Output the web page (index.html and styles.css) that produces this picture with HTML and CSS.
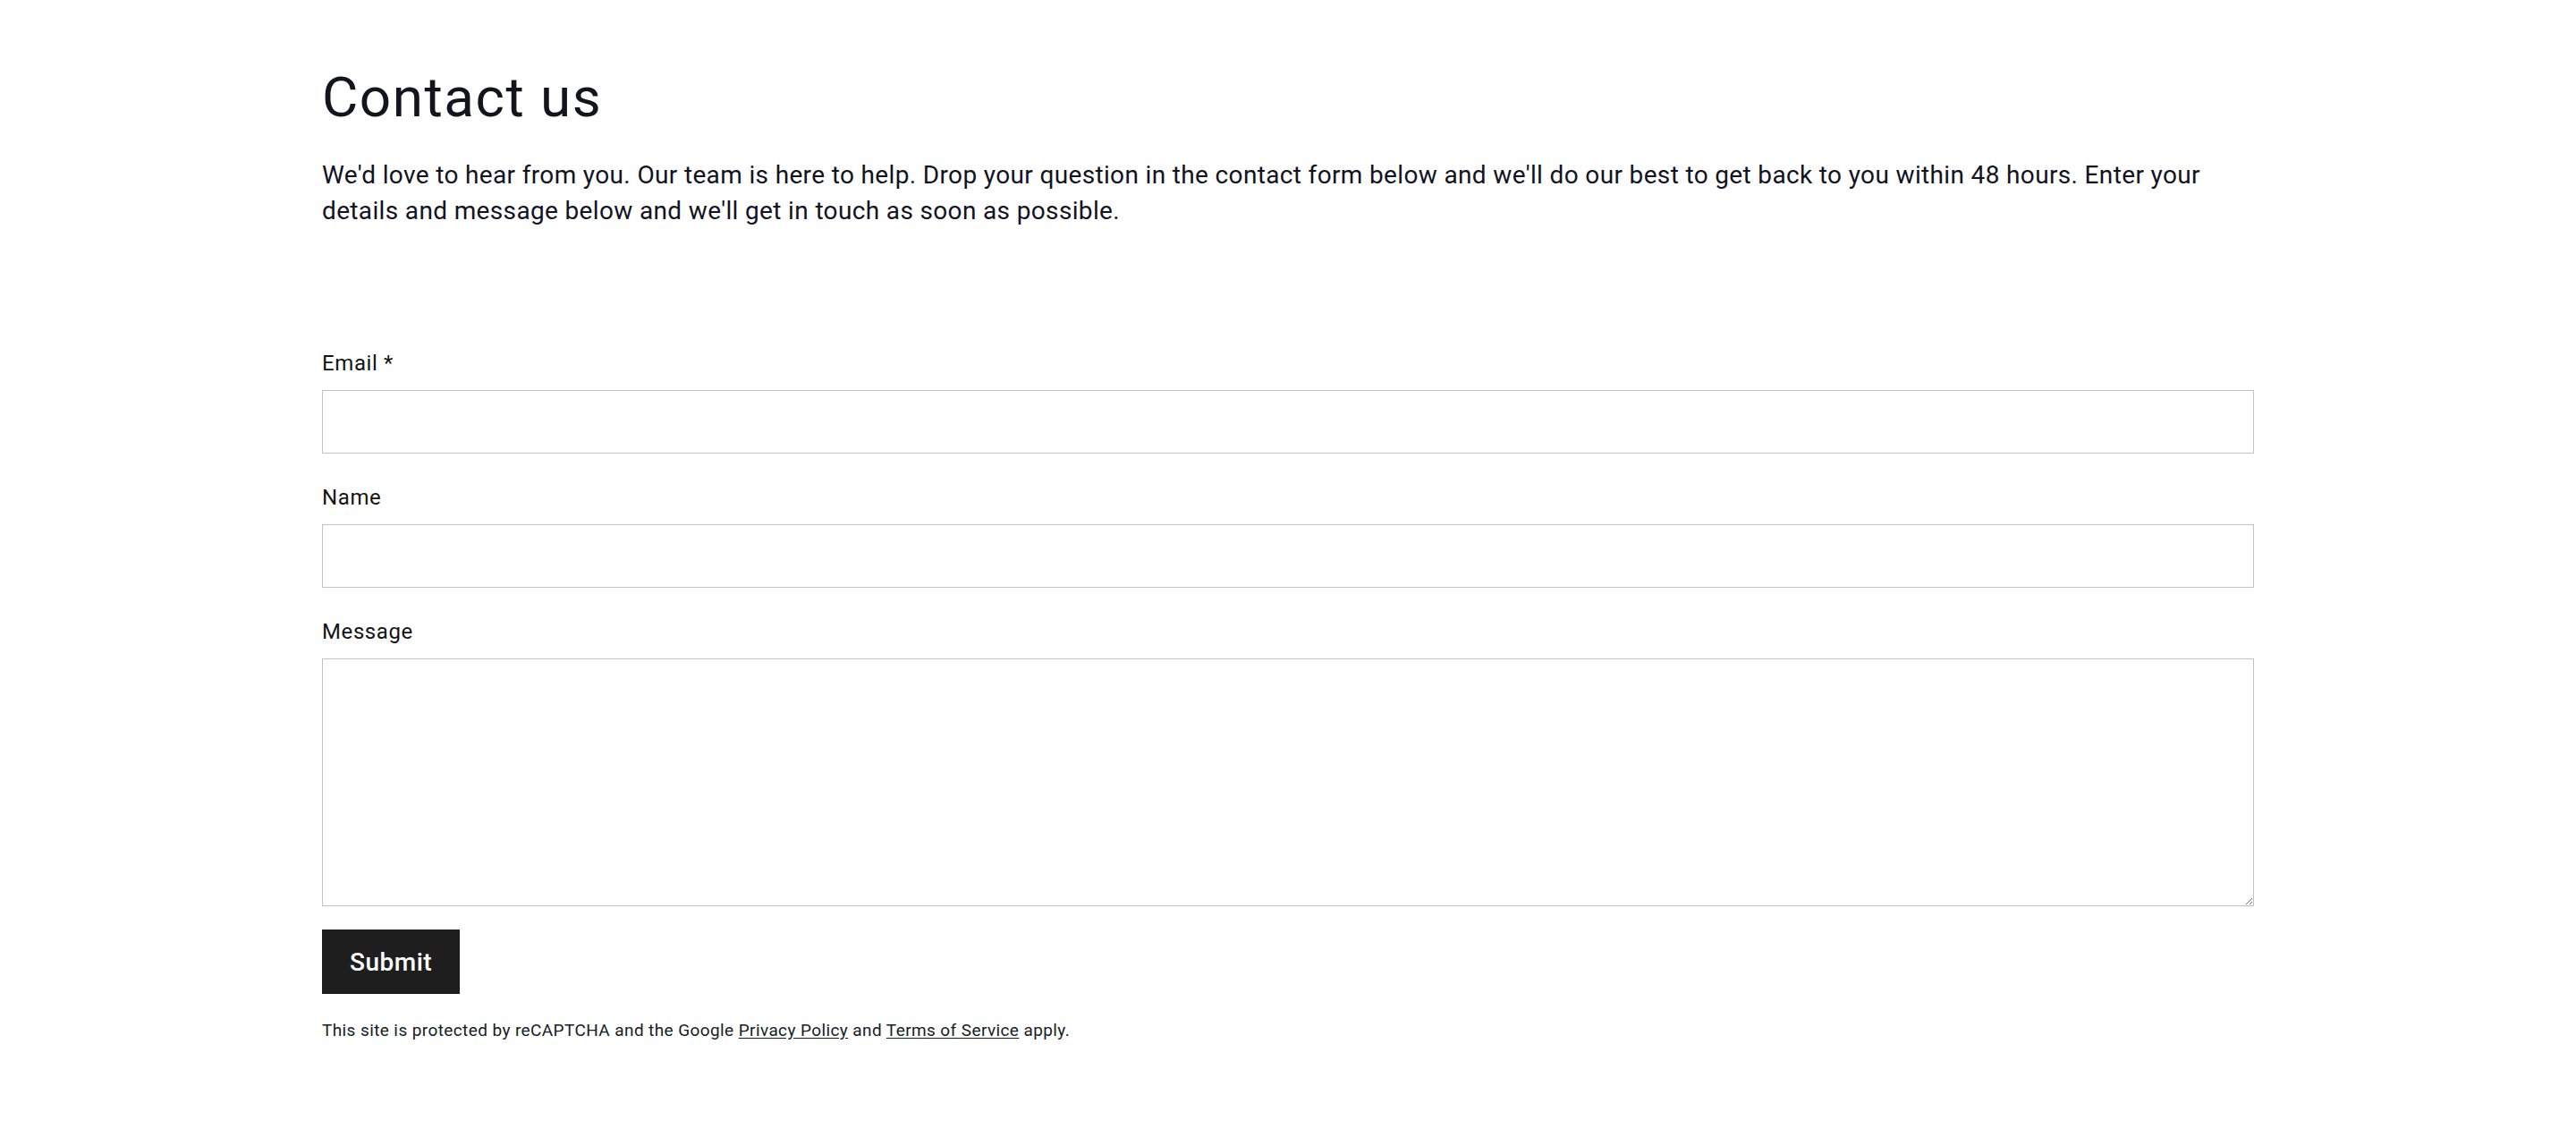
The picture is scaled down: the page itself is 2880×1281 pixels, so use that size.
FILE: index.html
```html
<!DOCTYPE html>
<html lang="en">
<head>
<meta charset="utf-8">
<title>Contact us</title>
<link rel="stylesheet" href="styles.css">
</head>
<body>
<main class="page">
  <header class="intro">
    <h1 class="title">Contact us</h1>
    <p class="lead">We'd love to hear from you. Our team is here to help. Drop your question in the contact form below and we'll do our best to get back to you within 48 hours. Enter your details and message below and we'll get in touch as soon as possible.</p>
  </header>
  <form class="form">
    <div class="field">
      <label class="label" for="email">Email *</label>
      <input class="input" id="email" type="email">
    </div>
    <div class="field">
      <label class="label" for="name">Name</label>
      <input class="input" id="name" type="text">
    </div>
    <div class="field field-last">
      <label class="label" for="message">Message</label>
      <textarea class="textarea" id="message"></textarea>
    </div>
    <div class="actions">
      <button class="submit" type="button">Submit</button>
    </div>
    <p class="legal">This site is protected by reCAPTCHA and the Google <a href="#">Privacy Policy</a> and <a href="#">Terms of Service</a> apply.</p>
  </form>
</main>
</body>
</html>
```
FILE: styles.css
```css
html, body {
  margin: 0;
  padding: 0;
  background: #ffffff;
}
body {
  font-family: Roboto, "Liberation Sans", sans-serif;
  color: #12131f;
}
.page {
  width: 2160px;
  margin: 0 auto;
  padding-top: 74px;
}
.intro {
  display: flex;
  flex-direction: column;
}
.title {
  margin: 0;
  font-size: 62px;
  line-height: 70px;
  font-weight: 400;
  letter-spacing: 1.5px;
  color: #14141f;
}
.lead {
  margin: 32px 0 0;
  font-size: 28px;
  line-height: 40px;
  font-weight: 400;
  letter-spacing: 0.35px;
  color: #12131f;
}
.form {
  display: flex;
  flex-direction: column;
  margin-top: 135px;
}
.field {
  display: flex;
  flex-direction: column;
  margin-bottom: 34px;
}
.field-last {
  margin-bottom: 0;
}
.label {
  font-size: 24px;
  line-height: 30px;
  font-weight: 400;
  letter-spacing: 0.6px;
  color: #141414;
  margin-bottom: 15px;
}
.input,
.textarea {
  box-sizing: border-box;
  width: 100%;
  border: 1px solid #c2c2c2;
  border-radius: 0;
  background: #fff;
  margin: 0;
  font-family: inherit;
  font-size: 21px;
  padding: 0 16px;
  outline: none;
}
.input {
  height: 71px;
}
.textarea {
  height: 277px;
  padding: 16px;
  display: block;
  resize: vertical;
}
.actions {
  display: flex;
  margin-top: 26px;
}
.submit {
  background: #1e1e1e;
  color: #ffffff;
  border: 0;
  border-radius: 0;
  height: 72px;
  padding: 0 31px;
  font-family: inherit;
  font-size: 28px;
  font-weight: 500;
  letter-spacing: 0.5px;
  cursor: pointer;
}
.legal {
  margin: 27px 0 0;
  font-size: 19px;
  line-height: 27px;
  letter-spacing: 0.4px;
  color: #16201f;
}
.legal a {
  color: inherit;
  text-decoration: underline;
  text-underline-offset: 2px;
}
```
